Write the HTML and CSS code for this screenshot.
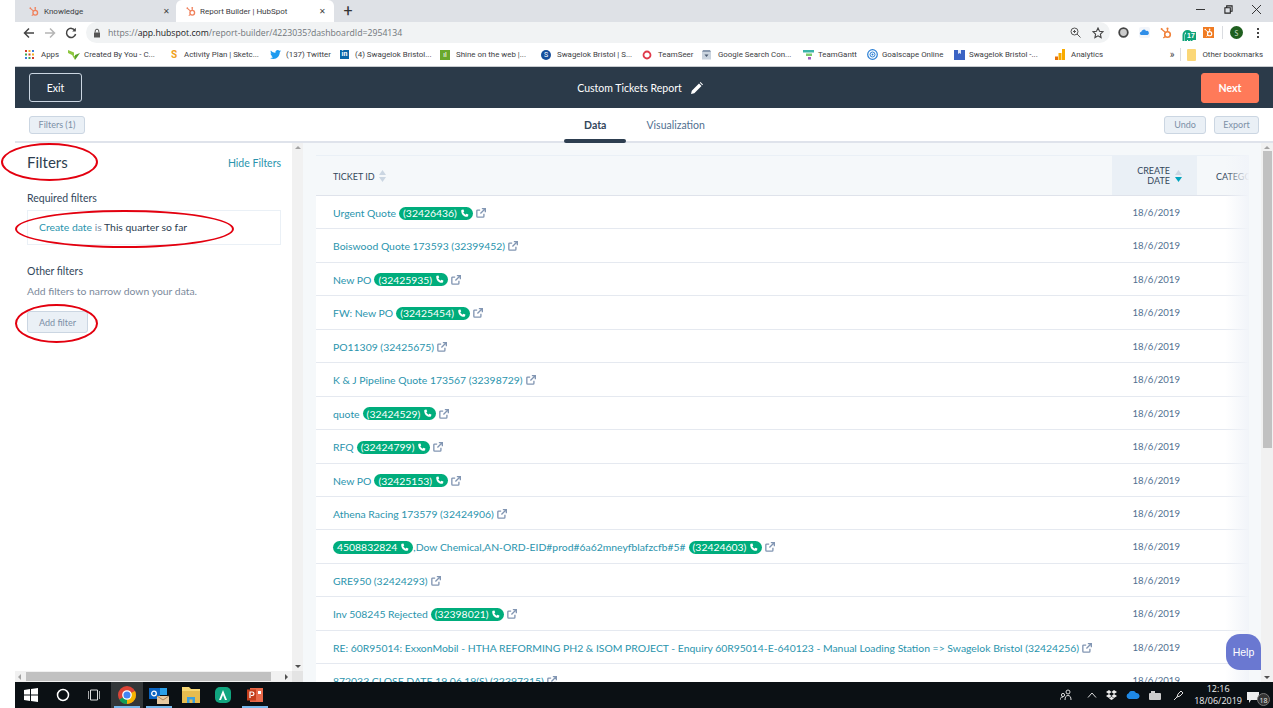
FILE: index.html
```html
<!DOCTYPE html>
<html lang="en">
<head>
    <meta charset="UTF-8">
    <title>Report Builder | HubSpot</title>
    <link rel="stylesheet" href="styles.css">
</head>
<body>

<svg class="defs" width="0" height="0">
    <symbol id="sprocket" viewBox="0 0 12 12">
        <circle cx="7.5" cy="7.5" r="2.8" fill="none" stroke="currentColor" stroke-width="1.6"/>
        <path d="M7.5 4.7V2M5.5 5.5 2 2.5M5.3 9.4l-2 1.6" fill="none" stroke="currentColor" stroke-width="1.3"/>
        <circle cx="7.5" cy="1.6" r="1.1" fill="currentColor"/>
        <circle cx="1.6" cy="2" r="1" fill="currentColor"/>
    </symbol>
    <symbol id="phone" viewBox="0 0 12 12">
        <path d="M2.6 1 4.6.6l1 2.7-1.3 1.1c.6 1.4 1.6 2.4 3.1 3.1l1.1-1.3 2.7 1-.4 2.1c-.1.6-.6 1-1.2 1C4.900 10.300 1.700 7 1.600 2.200 1.600 1.600 2 1.100 2.600 1z" fill="currentColor"/>
    </symbol>
    <symbol id="ext" viewBox="0 0 12 12">
        <path d="M9.500 7v3a1 1 0 0 1-1 1H2a1 1 0 0 1-1-1V3.500a1 1 0 0 1 1-1h3" fill="none" stroke="currentColor" stroke-width="1.600"/>
        <path d="M7 .8h4.200V5M11 1 5.300 6.700" fill="none" stroke="currentColor" stroke-width="1.600"/>
    </symbol>
    <symbol id="sort" viewBox="0 0 7 12">
        <path d="M3.500 0 7 5H0z" fill="#cbd6e2"/>
        <path d="M3.500 12 0 7h7z" fill="#cbd6e2"/>
    </symbol>
</svg>

<div class="window">

    <div class="tabstrip">
        <div class="tab">
            <svg class="tab-icon"><use href="#sprocket"/></svg>
            <span class="tab-title">Knowledge</span>
            <span class="tab-close">✕</span>
        </div>
        <div class="tab active">
            <svg class="tab-icon"><use href="#sprocket"/></svg>
            <span class="tab-title">Report Builder | HubSpot</span>
            <span class="tab-close">✕</span>
        </div>
        <span class="new-tab">+</span>
        <div class="win-controls">
            <svg width="9" height="9" viewBox="0 0 10 10"><path d="M0 5h10" stroke="#222" stroke-width="1"/></svg>
            <svg width="9" height="9" viewBox="0 0 10 10"><path d="M1 3h6v6H1zM3 3V1h6v6H7" fill="none" stroke="#222" stroke-width="1.200"/></svg>
            <svg width="9" height="9" viewBox="0 0 10 10"><path d="M0 0l10 10M10 0 0 10" stroke="#222" stroke-width="1"/></svg>
        </div>
    </div>

    <div class="toolbar">
        <div class="nav-btns">
            <svg width="12" height="12" viewBox="0 0 12 12"><path d="M11 6H2M6 1.500 1.500 6 6 10.500" fill="none" stroke="#444" stroke-width="1.500"/></svg>
            <svg width="12" height="12" viewBox="0 0 12 12"><path d="M1 6h9M6 1.500 10.500 6 6 10.500" fill="none" stroke="#b5b5b5" stroke-width="1.500"/></svg>
            <svg width="12" height="12" viewBox="0 0 12 12"><path d="M10 3.500A4.600 4.600 0 1 0 10.600 7" fill="none" stroke="#444" stroke-width="1.500"/><path d="M10.800 .8v3.600H7.200z" fill="#444"/></svg>
        </div>
        <div class="omnibox">
            <svg class="lock" width="8" height="10" viewBox="0 0 8 10"><path d="M1 4.500h6V9.500H1z" fill="#555"/><path d="M2.200 4.500V3a1.800 1.800 0 0 1 3.600 0v1.500" fill="none" stroke="#555"/></svg>
            <span class="url"><span class="url-dim">https://</span>app.hubspot.com<span class="url-dim">/report-builder/4223035?dashboardId=2954134</span></span>
            <svg class="omni-zoom" width="11" height="11" viewBox="0 0 11 11"><circle cx="4.500" cy="4.500" r="3.500" fill="none" stroke="#555"/><path d="M7 7l3.500 3.500M3 4.500h3M4.500 3v3" stroke="#555"/></svg>
            <svg width="12" height="12" viewBox="0 0 12 12"><path d="M6 1l1.500 3.300 3.500.4-2.600 2.400.7 3.500L6 8.800 2.900 10.600l.7-3.500L1 4.700l3.500-.4z" fill="none" stroke="#444" stroke-width="1.100"/></svg>
        </div>
        <div class="ext-icons">
            <svg width="11" height="11" viewBox="0 0 11 11"><circle cx="5.500" cy="5.500" r="4.300" fill="#ccc" stroke="#444" stroke-width="1.800"/></svg>
            <svg width="11" height="11" viewBox="0 0 11 11"><rect width="11" height="11" rx="2" fill="#f2f5fa"/><path d="M2 8a1.700 1.700 0 0 1 .3-3.300A2.500 2.500 0 0 1 7 4a2 2 0 0 1 1.500 4z" fill="#2f8ee8"/></svg>
            <svg class="ext-hub" width="12" height="12"><use href="#sprocket"/></svg>
            <span class="ext-badge-wrap">
                <svg width="11" height="12" viewBox="0 0 11 12"><path d="M1.500 11V5a4 4 0 0 1 8 0v6M4 11V5.500a1.500 1.500 0 0 1 3 0V11" fill="none" stroke="#10a37a" stroke-width="2"/></svg>
                <span class="ext-badge">17</span>
            </span>
            <span class="ext-orange"><svg width="9" height="9"><use href="#sprocket"/></svg></span>
            <span class="ext-sep"></span>
            <span class="avatar">S</span>
            <span class="kebab"></span>
        </div>
    </div>

    <div class="bookmarks">
        <div class="bm bm-apps">
            <svg width="9" height="9" viewBox="0 0 9 9"><g fill="#d23c2e"><rect width="2" height="2"/><rect x="3.500" width="2" height="2" fill="#f2b01e"/><rect x="7" width="2" height="2" fill="#3a7de0"/><rect y="3.500" width="2" height="2" fill="#3aa757"/><rect x="3.500" y="3.500" width="2" height="2"/><rect x="7" y="3.500" width="2" height="2" fill="#f2b01e"/><rect y="7" width="2" height="2" fill="#3a7de0"/><rect x="3.500" y="7" width="2" height="2" fill="#3aa757"/><rect x="7" y="7" width="2" height="2"/></g></svg>
            Apps
        </div>
        <div class="bm bm-created">
            <svg width="12" height="11" viewBox="0 0 12 11"><path d="M0 1l6 2.500V7L0 4z" fill="#8dc63f"/><path d="M12 4 7 11V6z" fill="#5aa02c"/><path d="M4 6l3 1v4z" fill="#8dc63f"/></svg>
            Created By You - C...
        </div>
        <div class="bm bm-activity">
            <span class="bm-s">S</span>
            Activity Plan | Sketc...
        </div>
        <div class="bm bm-twitter">
            <svg width="11" height="9" viewBox="0 0 11 9"><path d="M11 1.100 9.800 2.300C9.800 6 7 9 3.500 9 2.200 9 1 8.600 0 8c1.200.1 2.300-.2 3.200-.9C2.300 7 1.500 6.400 1.200 5.500h1C1.200 5.200.5 4.300.5 3.200c.3.200.7.300 1 .3C.6 2.900.3 1.600.9.600 2 2 3.600 2.800 5.400 2.900 5.100 1.400 6.200 0 7.700 0c.7 0 1.300.3 1.700.7.500-.1 1-.3 1.400-.6-.2.500-.5.900-.9 1.200.4 0 .8-.1 1.100-.2z" fill="#1d9bf0"/></svg>
            (137) Twitter
        </div>
        <div class="bm bm-linkedin">
            <span class="bm-in">in</span>
            (4) Swagelok Bristol...
        </div>
        <div class="bm bm-shine">
            <span class="bm-shine-box">ıl</span>
            Shine on the web |...
        </div>
        <div class="bm bm-swag">
            <span class="bm-round">S</span>
            Swagelok Bristol | S...
        </div>
        <div class="bm bm-seer">
            <svg width="10" height="10" viewBox="0 0 10 10"><circle cx="5" cy="5" r="3.500" fill="none" stroke="#e0394a" stroke-width="1.800"/></svg>
            TeamSeer
        </div>
        <div class="bm bm-google">
            <svg width="11" height="11" viewBox="0 0 11 11"><path d="M1 3h9v7.500H1z" fill="#c9d3de"/><path d="M2 1h7l1 2H1z" fill="#8b9bb0"/><path d="M3.500 5.500 5.500 8l2-2.500z" fill="#4a5a70"/></svg>
            Google Search Con...
        </div>
        <div class="bm bm-gantt">
            <svg width="11" height="10" viewBox="0 0 11 10"><rect width="11" height="2.500" fill="#3bb3a8"/><rect x="3" y="3.500" width="6" height="2.500" fill="#7bc86c"/><rect x="5" y="7" width="3" height="2.500" fill="#a05fc0"/></svg>
            TeamGantt
        </div>
        <div class="bm bm-goal">
            <svg width="11" height="11" viewBox="0 0 11 11"><circle cx="5.500" cy="5.500" r="4.800" fill="none" stroke="#2b7fd4" stroke-width="1.200"/><circle cx="5.500" cy="5.500" r="2.500" fill="none" stroke="#2b7fd4"/><circle cx="5.500" cy="5.500" r="1" fill="#2b7fd4"/></svg>
            Goalscape Online
        </div>
        <div class="bm bm-swag2">
            <svg width="11" height="11" viewBox="0 0 11 11"><path d="M0 1h11v10H0z" fill="#3b63c4"/><path d="M4 1h3v4L5.500 4 4 5z" fill="#dfe7f8"/></svg>
            Swagelok Bristol -...
        </div>
        <div class="bm bm-analytics">
            <svg width="10" height="11" viewBox="0 0 10 11"><rect x="0" y="7.500" width="3" height="3.500" fill="#e8710a"/><rect x="3.500" y="4" width="3" height="7" fill="#f9ab00"/><rect x="7" y="0" width="3" height="11" fill="#f9ab00"/></svg>
            Analytics
        </div>
        <div class="bm-end">
            <span class="bm-more">»</span>
            <span class="bm-sep"></span>
            <svg width="9" height="12" viewBox="0 0 9 12"><rect width="9" height="12" rx="1" fill="#fbd777"/></svg>
            <span>Other bookmarks</span>
        </div>
    </div>

    <div class="app-header">
        <button class="btn-exit">Exit</button>
        <div class="report-title">
            Custom Tickets Report
            <svg width="12" height="12" viewBox="0 0 12 12"><path d="M0 12l.8-3.300L8 1.500 10.500 4 3.300 11.200zM8.800.7 9.500 0 12 2.500l-.7.700z" fill="#fff"/></svg>
        </div>
        <button class="btn-next">Next</button>
    </div>

    <div class="subbar">
        <button class="btn-ghost btn-filters">Filters (1)</button>
        <div class="tabs">
            <span class="view-tab selected">Data</span>
            <span class="view-tab">Visualization</span>
        </div>
        <div class="sub-actions">
            <button class="btn-ghost btn-undo">Undo</button>
            <button class="btn-ghost btn-export">Export</button>
        </div>
    </div>

    <div class="content">

        <div class="sidebar">
            <div class="sidebar-top">
                <div class="sidebar-body">
                    <div class="filters-head">
                        <h2>Filters</h2>
                        <a class="link">Hide Filters</a>
                    </div>
                    <h3>Required filters</h3>
                    <div class="filter-box"><a class="link">Create date</a> <span class="grey">is</span> This quarter so far</div>
                    <h3 class="other">Other filters</h3>
                    <p>Add filters to narrow down your data.</p>
                    <button class="btn-ghost btn-add">Add filter</button>
                </div>
                <div class="vscroll thin">
                    <span class="arrow-up"></span>
                    <span class="arrow-down"></span>
                </div>
            </div>
            <div class="hscroll">
                <span class="arrow-left"></span>
                <span class="hthumb"></span>
                <span class="arrow-right"></span>
                <span class="corner"></span>
            </div>
        </div>

        <div class="main">
            <div class="table">
                <div class="thead">
                    <div class="th">TICKET ID <svg class="sort" width="7" height="12"><use href="#sort"/></svg></div>
                    <div class="th th-date">
                        <span>CREATE<br>DATE</span>
                        <svg class="sort" width="7" height="12" viewBox="0 0 7 12"><path d="M3.500 0 7 5H0z" fill="#cbd6e2"/><path d="M3.500 12 0 7h7z" fill="#00a4bd"/></svg>
                    </div>
                    <div class="th th-cat">CATEGORY</div>
                </div>

                <div class="row"><div class="td"><a class="link">Urgent Quote</a><span class="pill">(32426436)<svg width="9" height="9"><use href="#phone"/></svg></span><svg class="ext" width="10" height="10"><use href="#ext"/></svg></div><div class="date">18/6/2019</div></div>
                <div class="row"><div class="td"><a class="link">Boiswood Quote 173593 (32399452)</a><svg class="ext" width="10" height="10"><use href="#ext"/></svg></div><div class="date">18/6/2019</div></div>
                <div class="row"><div class="td"><a class="link">New PO</a><span class="pill">(32425935)<svg width="9" height="9"><use href="#phone"/></svg></span><svg class="ext" width="10" height="10"><use href="#ext"/></svg></div><div class="date">18/6/2019</div></div>
                <div class="row"><div class="td"><a class="link">FW: New PO</a><span class="pill">(32425454)<svg width="9" height="9"><use href="#phone"/></svg></span><svg class="ext" width="10" height="10"><use href="#ext"/></svg></div><div class="date">18/6/2019</div></div>
                <div class="row"><div class="td"><a class="link">PO11309 (32425675)</a><svg class="ext" width="10" height="10"><use href="#ext"/></svg></div><div class="date">18/6/2019</div></div>
                <div class="row"><div class="td"><a class="link">K &amp; J Pipeline Quote 173567 (32398729)</a><svg class="ext" width="10" height="10"><use href="#ext"/></svg></div><div class="date">18/6/2019</div></div>
                <div class="row"><div class="td"><a class="link">quote</a><span class="pill">(32424529)<svg width="9" height="9"><use href="#phone"/></svg></span><svg class="ext" width="10" height="10"><use href="#ext"/></svg></div><div class="date">18/6/2019</div></div>
                <div class="row"><div class="td"><a class="link">RFQ</a><span class="pill">(32424799)<svg width="9" height="9"><use href="#phone"/></svg></span><svg class="ext" width="10" height="10"><use href="#ext"/></svg></div><div class="date">18/6/2019</div></div>
                <div class="row"><div class="td"><a class="link">New PO</a><span class="pill">(32425153)<svg width="9" height="9"><use href="#phone"/></svg></span><svg class="ext" width="10" height="10"><use href="#ext"/></svg></div><div class="date">18/6/2019</div></div>
                <div class="row"><div class="td"><a class="link">Athena Racing 173579 (32424906)</a><svg class="ext" width="10" height="10"><use href="#ext"/></svg></div><div class="date">18/6/2019</div></div>
                <div class="row"><div class="td"><span class="pill pill-first">4508832824<svg width="9" height="9"><use href="#phone"/></svg></span><a class="link">,Dow Chemical,AN-ORD-EID#prod#6a62mneyfblafzcfb#5#</a><span class="pill">(32424603)<svg width="9" height="9"><use href="#phone"/></svg></span><svg class="ext" width="10" height="10"><use href="#ext"/></svg></div><div class="date">18/6/2019</div></div>
                <div class="row"><div class="td"><a class="link">GRE950 (32424293)</a><svg class="ext" width="10" height="10"><use href="#ext"/></svg></div><div class="date">18/6/2019</div></div>
                <div class="row"><div class="td"><a class="link">Inv 508245 Rejected</a><span class="pill">(32398021)<svg width="9" height="9"><use href="#phone"/></svg></span><svg class="ext" width="10" height="10"><use href="#ext"/></svg></div><div class="date">18/6/2019</div></div>
                <div class="row"><div class="td"><a class="link">RE: 60R95014: ExxonMobil - HTHA REFORMING PH2 &amp; ISOM PROJECT - Enquiry 60R95014-E-640123 - Manual Loading Station =&gt; Swagelok Bristol (32424256)</a><svg class="ext" width="10" height="10"><use href="#ext"/></svg></div><div class="date">18/6/2019</div></div>
                <div class="row"><div class="td"><a class="link">872033 CLOSE DATE 19.06.19(S) (32397315)</a><svg class="ext" width="10" height="10"><use href="#ext"/></svg></div><div class="date">18/6/2019</div></div>
            </div>
            <div class="help">Help</div>
        </div>

        <div class="vscroll page-scroll">
            <span class="arrow-up"></span>
            <span class="vthumb"></span>
            <span class="arrow-down"></span>
        </div>
    </div>

    <div class="taskbar">
        <div class="task-cell">
            <svg width="14" height="14" viewBox="0 0 14 14"><path d="M0 2l6-.9V6.500H0zM7 1l7-1v6.500H7zM0 7.500h6v5.400l-6-.9zM7 7.500h7V14l-7-1z" fill="#fff"/></svg>
        </div>
        <div class="task-cell">
            <svg width="14" height="14" viewBox="0 0 14 14"><circle cx="7" cy="7" r="5.500" fill="none" stroke="#fff" stroke-width="1.500"/></svg>
        </div>
        <div class="task-cell task-view">
            <svg width="12" height="12" viewBox="0 0 12 12"><path d="M2.500 1h7v10h-7z" fill="none" stroke="#ddd"/><path d="M0 2v8M12 2v8" stroke="#ddd" stroke-width="1.500"/></svg>
        </div>
        <div class="task-cell open current">
            <svg width="18" height="18" viewBox="0 0 18 18"><circle cx="9" cy="9" r="9" fill="#db4437"/><path d="M9 9 1.200 13.500A9 9 0 0 0 9 18z" fill="#0f9d58"/><path d="M9 9v9a9 9 0 0 0 8-13z" fill="#f4b400"/><circle cx="9" cy="9" r="4.200" fill="#4285f4" stroke="#fff" stroke-width="1.300"/></svg>
        </div>
        <div class="task-cell open">
            <svg width="20" height="18" viewBox="0 0 20 18"><path d="M0 2h11v11H0z" fill="#0a64c2"/><path d="M11 2h7v7h-7z" fill="#2a9fe8"/><path d="M8 10h12v8H8z" fill="#e8c9a0"/><path d="M8 10l6 4 6-4" fill="none" stroke="#a98458"/><circle cx="5" cy="7.500" r="2.300" fill="none" stroke="#fff" stroke-width="1.300"/></svg>
        </div>
        <div class="task-cell">
            <svg width="18" height="16" viewBox="0 0 18 16"><path d="M0 0h7l2 2h9v14H0z" fill="#f7d774"/><path d="M0 4h18v12H0z" fill="#e6bc4f"/><path d="M5 10h8v6H5z" fill="#3aa0e0"/><path d="M7.500 12.500h3V16h-3z" fill="#e6bc4f"/></svg>
        </div>
        <div class="task-cell">
            <svg width="16" height="16" viewBox="0 0 16 16"><rect width="16" height="16" rx="5" fill="#11a57f"/><path d="M4 13 8 3l4 10H10L8 8l-2 5z" fill="#fff"/></svg>
        </div>
        <div class="task-cell open">
            <svg width="16" height="16" viewBox="0 0 16 16"><path d="M3 1h13v14H3z" fill="#e8694a"/><path d="M0 2.500h9v11H0z" fill="#c43e1c"/><path d="M3 11V5h2.200a1.700 1.700 0 0 1 0 3.500H4" fill="none" stroke="#fff" stroke-width="1.200"/><path d="M11 4h3v3h-3z" fill="#fff"/></svg>
        </div>

        <div class="tray">
            <svg width="12" height="12" viewBox="0 0 12 12"><circle cx="8" cy="3" r="2" fill="none" stroke="#ddd"/><circle cx="3" cy="6" r="1.600" fill="none" stroke="#ddd"/><path d="M5 11c0-3 1-4.500 3-4.500s3 1.500 3 4.500M0 11c0-2 1-3 3-3" fill="none" stroke="#ddd"/></svg>
            <svg class="tray-chevron" width="10" height="6" viewBox="0 0 10 6"><path d="M1 5.500 5 1l4 4.500" fill="none" stroke="#ddd"/></svg>
            <svg width="11" height="10" viewBox="0 0 11 10"><path d="M3 0 0 2l3 2 2.500-2zM8 0 5.500 2 8 4l3-2zM0 6l3-2 2.500 2L3 8zM11 6 8 4 5.500 6 8 8zM3 8.500 5.500 6.800 8 8.500 5.500 10z" fill="#eee"/></svg>
            <svg width="14" height="8" viewBox="0 0 14 8"><path d="M3 8a3 3 0 0 1-.3-5.800A4 4 0 0 1 10 2a3 3 0 0 1 1 6z" fill="#1e88e5"/></svg>
            <svg width="13" height="9" viewBox="0 0 13 9"><rect y="2" width="12" height="7" rx="1" fill="#ccc"/><rect x="2" width="4" height="3" fill="#ccc"/></svg>
            <svg class="tray-pen" width="12" height="12" viewBox="0 0 12 12"><path d="M1 11 4 8l1-3 3-3 2 2-3 3-3 1z" fill="none" stroke="#ddd"/></svg>
            <div class="clock"><span>12:16</span><span>18/06/2019</span></div>
            <div class="notif">
                <svg width="12" height="11" viewBox="0 0 12 11"><path d="M0 0h12v8H4l-2 3V8H0z" fill="#eee"/></svg>
                <span class="notif-count">18</span>
            </div>
        </div>
    </div>
</div>

<!-- red rings drawn on top of the screenshot -->
<span class="ring ring-title"></span>
<span class="ring ring-date"></span>
<span class="ring ring-add"></span>

</body>
</html>
```

FILE: styles.css
```css
* { box-sizing: border-box; }
html, body { margin: 0; padding: 0; height: 708px; overflow: hidden; background: #fff; }
body { font-family: Lato, "Liberation Sans", sans-serif; color: #33475b; position: relative; }
.defs { position: absolute; }
button { font-family: inherit; cursor: pointer; }
h2, h3, p { margin: 0; }

.window { margin-left: 15px; height: 708px; display: flex; flex-direction: column; }

/* chrome */
.tabstrip { height: 22px; flex: none; background: #dee1e6; display: flex; align-items: stretch; font-family: Roboto, "Liberation Sans", sans-serif; font-size: 8px; color: #3c4043; }
.tab { width: 161px; display: flex; align-items: center; padding-left: 14px; padding-right: 6px; }
.tab.active { width: 158px; background: #fff; border-radius: 6px 6px 0 0; padding-left: 10px; padding-right: 8px; }
.tab-icon { width: 10px; height: 11px; color: #f0815c; margin-right: 5px; flex: none; }
.tab.active .tab-icon { margin-right: 4px; }
.tab-title { flex: 1; white-space: nowrap; }
.tab-close { font-size: 8px; color: #444; }
.new-tab { margin-left: 4px; font-size: 16px; line-height: 22px; color: #333; width: 20px; text-align: center; }
.win-controls { margin-left: auto; display: flex; align-items: flex-start; gap: 19px; padding: 5px 12px 0 0; }

.toolbar { height: 21px; flex: none; background: #fff; display: flex; align-items: center; }
.nav-btns { display: flex; gap: 9px; padding-left: 8px; width: 71px; }
.omnibox { width: 1024px; height: 21px; background: #f1f3f4; border-radius: 11px; display: flex; align-items: center; padding: 0 6px 0 7px; font-family: "Open Sans", "Liberation Sans", sans-serif; font-size: 8.700px; color: #202124; }
.lock { margin-right: 7px; }
.url-dim { color: #70757a; }
.omni-zoom { margin-left: auto; margin-right: 11px; }
.ext-icons { display: flex; align-items: center; padding-left: 8px; flex: 1; }
.ext-icons > * { flex: none; margin-right: 10px; }
.ext-hub { color: #f0813a; }
.ext-badge-wrap { position: relative; width: 12px; height: 14px; margin-right: 9px; }
.ext-badge { position: absolute; left: 4px; top: 6px; background: #10a37a; color: #fff; font-family: "Liberation Sans", sans-serif; font-size: 7px; font-weight: 700; padding: 0 1px; line-height: 8px; }
.ext-orange { width: 11px; height: 11px; background: #f07b22; color: #fff; display: flex; align-items: center; justify-content: center; margin-right: 8px !important; }
.ext-sep { width: 1px; height: 13px; background: #dadce0; margin-right: 7px !important; }
.avatar { width: 13px; height: 13px; border-radius: 50%; background: #1f5f1f; color: #c9dcc9; font-size: 7px; display: flex; align-items: center; justify-content: center; margin-right: 14px !important; }
.kebab { width: 2px; height: 2px; background: #444; box-shadow: 0 -4px 0 #444, 0 4px 0 #444; }

.bookmarks { height: 24px; flex: none; background: #fff; display: flex; align-items: center; font-family: Roboto, "Liberation Sans", sans-serif; font-size: 7.900px; color: #3c4043; padding-left: 10px; border-bottom: 1px solid #c8ccd0; }
.bm { display: flex; align-items: center; gap: 5px; white-space: nowrap; flex: none; }
.bm-apps { width: 43px; gap: 7px; }
.bm-created { width: 102px; gap: 4px; }
.bm-activity { width: 100px; gap: 6px; }
.bm-twitter { width: 70px; }
.bm-linkedin { width: 100px; gap: 6px; }
.bm-shine { width: 101px; gap: 6px; }
.bm-swag { width: 101px; gap: 6px; }
.bm-seer { width: 59px; gap: 6px; }
.bm-google { width: 102px; gap: 6px; }
.bm-gantt { width: 64px; gap: 4px; }
.bm-goal { width: 87px; gap: 4px; }
.bm-swag2 { width: 101px; gap: 4px; }
.bm-analytics { width: 60px; gap: 6px; }
.bm-s { width: 8px; color: #f0a020; font-weight: 700; font-size: 10px; text-align: center; }
.bm-in { width: 9px; height: 9px; background: #0a66a8; color: #fff; font-size: 7px; line-height: 9px; text-align: center; font-weight: 700; }
.bm-shine-box { width: 10px; height: 10px; background: #6aa82c; color: #fff; font-size: 7px; line-height: 10px; text-align: center; }
.bm-round { width: 10px; height: 10px; border-radius: 50%; background: #164f9c; color: #fff; font-size: 7px; line-height: 10px; text-align: center; }
.bm-end { margin-left: auto; display: flex; align-items: center; padding-right: 10px; gap: 6px; }
.bm-more { font-size: 10px; }
.bm-sep { width: 1px; height: 13px; background: #dadce0; }

/* report builder bars */
.app-header { height: 41px; flex: none; background: #2b3a49; display: flex; align-items: center; justify-content: space-between; padding: 0 14px; position: relative; color: #fff; }
.btn-exit { width: 53px; height: 29px; background: transparent; border: 1px solid #cbd6e2; border-radius: 3px; color: #fff; font-size: 10.500px; }
.btn-next { width: 58px; height: 30px; background: #ff7a59; border: 1px solid #ff7a59; border-radius: 3px; color: #fff; font-size: 10.500px; font-weight: 700; }
.report-title { display: flex; align-items: center; gap: 9px; font-size: 10.500px; margin-left: -3px; }

.subbar { height: 35px; flex: none; background: #fff; border-bottom: 2px solid #dfe3eb; display: flex; align-items: center; justify-content: space-between; padding: 0 14px; position: relative; }
.btn-ghost { height: 18px; background: #eaf0f6; border: 1px solid #cbd6e2; border-radius: 3px; color: #7c8fa6; font-size: 9px; padding: 0; }
.btn-filters { width: 56px; }
.tabs { display: flex; gap: 40px; align-self: stretch; font-size: 10.500px; color: #516f90; margin-left: 40px; }
.view-tab { position: relative; display: flex; align-items: center; }
.view-tab.selected { color: #33475b; font-weight: 700; }
.view-tab.selected::after { content: ""; position: absolute; left: -20px; right: -20px; bottom: -2px; height: 4px; background: #2d3e50; border-radius: 2px; }
.sub-actions { display: flex; gap: 8px; }
.btn-undo { width: 42px; }
.btn-export { width: 45px; }

/* content area */
.content { flex: 1; min-height: 0; display: flex; background: #f5f8fa; }

.sidebar { width: 288px; flex: none; display: flex; flex-direction: column; background: #fff; }
.sidebar-top { flex: 1; display: flex; min-height: 0; }
.sidebar-body { flex: 1; padding: 9px 11px 0 12px; font-size: 10.400px; }
.filters-head { display: flex; justify-content: space-between; align-items: center; height: 20px; margin-bottom: 20px; }
.filters-head h2 { font-size: 15px; font-weight: 400; color: #2d3e50; }
.filters-head .link { font-size: 10.500px; padding-top: 2px; }
.sidebar-body h3 { font-size: 10.500px; font-weight: 400; line-height: 13px; color: #33475b; }
.filter-box { margin-top: 5px; height: 35px; border: 1px solid #eaf0f6; padding-left: 11px; line-height: 33px; color: #2d3e50; }
.grey { color: #7c8fa6; }
.sidebar-body h3.other { margin-top: 20px; }
.sidebar-body p { margin-top: 7px; color: #7c8a9c; line-height: 13px; }
.btn-add { display: block; margin-top: 13px; width: 61px; height: 22px; }

.vscroll { width: 11px; flex: none; background: #f1f1f1; display: flex; flex-direction: column; align-items: center; justify-content: space-between; padding: 3px 0; }
.arrow-up { width: 0; height: 0; border: 3px solid transparent; border-top: 0; border-bottom: 3px solid #a3a3a3; }
.arrow-down { width: 0; height: 0; border: 3px solid transparent; border-bottom: 0; border-top: 3px solid #505050; }
.hscroll { height: 11px; flex: none; background: #f1f1f1; display: flex; align-items: center; }
.arrow-left { width: 0; height: 0; margin: 0 4px 0 3px; border: 3px solid transparent; border-left: 0; border-right: 3px solid #a3a3a3; }
.hthumb { width: 245px; height: 9px; background: #c1c1c1; margin-left: 1px; }
.arrow-right { width: 0; height: 0; margin-left: 14px; border: 3px solid transparent; border-right: 0; border-left: 3px solid #505050; }
.corner { margin-left: auto; width: 11px; height: 11px; background: #e4e4e4; }

.main { flex: 1; min-width: 0; position: relative; overflow: hidden; padding: 12px 12px 0 13px; }
.table { width: 933px; overflow: hidden; position: relative; }
.table::after { content: ""; position: absolute; top: 0; right: 0; bottom: 0; width: 24px; background: linear-gradient(to right, rgba(245, 248, 250, 0), #f1f4f9); }
.thead { height: 41px; display: grid; grid-template-columns: 796px 85px 52px; background: #f5f8fa; border-top: 1px solid #eaf0f6; border-bottom: 1px solid #dfe3eb; font-size: 9px; color: #33475b; }
.th { display: flex; align-items: center; padding: 1px 0 0 17px; gap: 4px; white-space: nowrap; }
.th-date { background: #eaf0f6; justify-content: flex-end; padding: 1px 15px 0 0; gap: 5px; text-align: right; line-height: 10.500px; }
.th-cat { padding-left: 19px; overflow: hidden; }
.sort { flex: none; }

.row { height: 33.450px; display: grid; grid-template-columns: 796px 85px 52px; background: #fff; border-bottom: 1px solid #e5e9f0; font-size: 10.400px; }
.td { display: flex; align-items: center; padding-left: 17px; white-space: nowrap; }
.link { color: #2a94ad; }
.pill { display: inline-flex; align-items: center; gap: 3px; height: 13px; margin-left: 3px; padding: 0 4px; background: #00ad7c; color: #fff; border-radius: 7px; }
.pill-first { margin-left: 0; }
.ext { color: #8296b3; margin-left: 3px; flex: none; }
.date { text-align: right; padding-right: 17px; line-height: 34px; color: #516f90; font-size: 9.600px; }

.help { position: absolute; left: 923px; top: 491px; width: 35px; height: 36px; background: #6a78d1; color: #fff; font-size: 10.500px; line-height: 36px; text-align: center; border-radius: 14px 14px 0 14px; font-family: "Liberation Sans", sans-serif; }

.page-scroll { width: 12px; padding-top: 3px; justify-content: flex-start; }
.vthumb { width: 9px; height: 297px; background: #c1c1c1; margin-top: 2px; }
.page-scroll .arrow-down { margin-top: auto; }

/* windows taskbar */
.taskbar { height: 26px; flex: none; background: #0b1014; display: flex; align-items: stretch; color: #eee; font-family: "Open Sans", "Liberation Sans", sans-serif; }
.task-cell { width: 32px; display: flex; align-items: center; justify-content: center; position: relative; }
.task-view { padding-right: 3px; }
.task-cell.current { background: #333739; }
.task-cell.open::after { content: ""; position: absolute; left: 3px; right: 3px; bottom: 0; height: 2px; background: #76b9ed; }
.tray { margin-left: auto; display: flex; align-items: center; gap: 9px; padding-right: 6px; }
.tray-chevron { margin-left: 6px; }
.tray-pen { margin-left: 2px; }
.clock { display: flex; flex-direction: column; align-items: center; font-size: 9px; line-height: 12px; }
.notif { position: relative; width: 20px; height: 18px; margin-left: -4px; }
.notif-count { position: absolute; right: -3px; bottom: -2px; width: 13px; height: 13px; border-radius: 50%; background: #333; font-size: 7px; line-height: 13px; text-align: center; border: 1px solid #777; }

/* annotations */
.ring { position: absolute; border: 2px solid #e3000f; border-radius: 50%; pointer-events: none; }
.ring-title { left: 1px; top: 143px; width: 97px; height: 38px; }
.ring-date { left: 15px; top: 210px; width: 219px; height: 38px; }
.ring-add { left: 15px; top: 304px; width: 83px; height: 39px; }
```
